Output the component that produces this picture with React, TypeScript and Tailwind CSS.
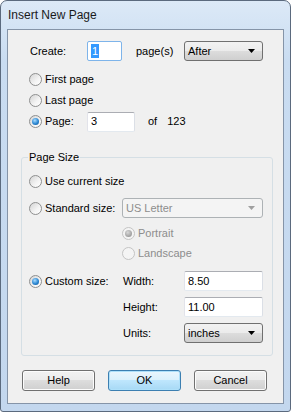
import type { ReactNode } from 'react'

const font = { fontFamily: '"Liberation Sans", Arial, sans-serif' }

function Radio({ checked = false, disabled = false }: { checked?: boolean; disabled?: boolean }) {
  return (
    <span
      className={`w-[13px] h-[13px] rounded-full border flex items-center justify-center shrink-0 ${
        disabled
          ? 'border-[#c4c4c4] bg-[#f4f4f4]'
          : 'border-[#8e8f8f] bg-[linear-gradient(135deg,#d4d4d4,#f4f4f4_60%,#ffffff)]'
      }`}
    >
      {checked && (
        <span
          className={`w-[7px] h-[7px] rounded-full ${
            disabled
              ? 'bg-[radial-gradient(circle_at_40%_35%,#d8d8d8,#9a9a9a_75%)]'
              : 'bg-[radial-gradient(circle_at_40%_35%,#a9dcff,#2a86d2_55%,#10508f)]'
          }`}
        />
      )}
    </span>
  )
}

function RadioRow({ label, checked, disabled, width }: { label: string; checked?: boolean; disabled?: boolean; width?: string }) {
  return (
    <div className={`flex items-center h-[20px] gap-[3px] ${width ?? ''}`}>
      <Radio checked={checked} disabled={disabled} />
      <span className={disabled ? 'text-[#8d8d8d]' : 'text-black'}>{label}</span>
    </div>
  )
}

function TextBox({ children, className = '', focused = false }: { children: ReactNode; className?: string; focused?: boolean }) {
  return (
    <div
      className={`h-[20px] bg-white border rounded-[2px] flex items-center pl-[3px] ${
        focused ? 'border-[#7eb4ea]' : 'border-[#abadb3] border-l-[#e2e3ea] border-r-[#dbdfe6] border-b-[#e3e9ef]'
      } ${className}`}
    >
      {children}
    </div>
  )
}

function Arrow({ color = '#000' }: { color?: string }) {
  return (
    <svg width="7" height="4" viewBox="0 0 7 4">
      <path d="M0 0h7L3.5 4z" fill={color} />
    </svg>
  )
}

function Combo({ value, disabled = false, className = '' }: { value: string; disabled?: boolean; className?: string }) {
  return (
    <div
      className={`h-[20px] w-[79px] rounded-[3px] border flex items-center justify-between pl-[3px] pr-[7px] ${
        disabled
          ? 'border-[#adb2b5] bg-[#f4f4f4] text-[#8d8d8d]'
          : 'border-[#707070] bg-[linear-gradient(#f2f2f2,#ebebeb_50%,#dddddd_50%,#cfcfcf)] text-black'
      } ${className}`}
    >
      <span>{value}</span>
      <Arrow color={disabled ? '#a0a0a0' : '#000'} />
    </div>
  )
}

function Button({ label, primary = false }: { label: string; primary?: boolean }) {
  return (
    <div
      className={`w-[73px] h-[21px] rounded-[3px] border flex items-center justify-center ${
        primary
          ? 'border-[#3c7fb1] bg-[linear-gradient(#eaf6fd,#d9f0fc_50%,#bee6fd_50%,#a7d9f5)] shadow-[inset_0_0_0_1px_#aee0fa]'
          : 'border-[#707070] bg-[linear-gradient(#f2f2f2,#ebebeb_50%,#dddddd_50%,#cfcfcf)] shadow-[inset_0_0_0_1px_#fcfcfc]'
      }`}
    >
      {label}
    </div>
  )
}

export default function App() {
  return (
    <div
      style={font}
      className="w-[291px] h-[412px] rounded-t-[7px] rounded-b-[3px] border border-[#5b6a7e] bg-[linear-gradient(#dce9f7,#c9dcf1_60px,#c3d7ee)] flex flex-col px-[6px] pb-[7px] text-[11px] text-black"
    >
      <div className="h-[28px] flex items-center pl-[1px] text-[12px] text-[#1a1a1a]">Insert New Page</div>

      <div className="flex-1 border border-[#8594a8] bg-[#f0f0f0] flex flex-col pt-[11px]">
        <div className="flex items-center h-[20px] pl-[22px]">
          <span className="w-[57px]">Create:</span>
          <TextBox focused className="w-[35px]">
            <span className="bg-[#3399ff] text-white px-[1px] leading-[14px]">1</span>
          </TextBox>
          <span className="ml-[14px] w-[48px]">page(s)</span>
          <Combo value="After" />
        </div>

        <div className="flex flex-col pl-[21px] mt-[8px]">
          <div className="h-[21px] flex items-center">
            <RadioRow label="First page" />
          </div>
          <div className="h-[21px] flex items-center">
            <RadioRow label="Last page" />
          </div>
          <div className="h-[21px] flex items-center">
            <RadioRow label="Page:" checked width="w-[58px]" />
            <TextBox className="w-[48px]">3</TextBox>
            <span className="ml-[13px]">of</span>
            <span className="ml-[10px]">123</span>
          </div>
        </div>

        <div className="relative ml-[13px] mt-[25px] w-[252px] border border-[#d5dfe5] rounded-[3px] pt-[13px] pb-[12px] pl-[7px] flex flex-col">
          <span className="absolute left-[6px] -top-[7px] bg-[#f0f0f0] px-[1px] leading-[13px]">Page Size</span>

          <RadioRow label="Use current size" />

          <div className="flex items-center mt-[7px]">
            <RadioRow label="Standard size:" width="w-[93px]" />
            <Combo value="US Letter" disabled className="w-[141px]" />
          </div>

          <div className="pl-[93px] mt-[5px] flex flex-col">
            <RadioRow label="Portrait" checked disabled />
            <RadioRow label="Landscape" disabled />
          </div>

          <div className="flex mt-[8px]">
            <div className="w-[93px] h-[20px] flex items-center">
              <RadioRow label="Custom size:" checked />
            </div>
            <div className="flex flex-col gap-[6px]">
              <div className="flex items-center">
                <span className="w-[62px] pl-[1px]">Width:</span>
                <TextBox className="w-[79px]">8.50</TextBox>
              </div>
              <div className="flex items-center">
                <span className="w-[62px] pl-[1px]">Height:</span>
                <TextBox className="w-[79px]">11.00</TextBox>
              </div>
              <div className="flex items-center">
                <span className="w-[62px] pl-[1px]">Units:</span>
                <Combo value="inches" />
              </div>
            </div>
          </div>
        </div>

        <div className="flex items-center gap-[13px] pl-[14px] mt-[14px]">
          <Button label="Help" />
          <Button label="OK" primary />
          <Button label="Cancel" />
        </div>
      </div>
    </div>
  )
}
